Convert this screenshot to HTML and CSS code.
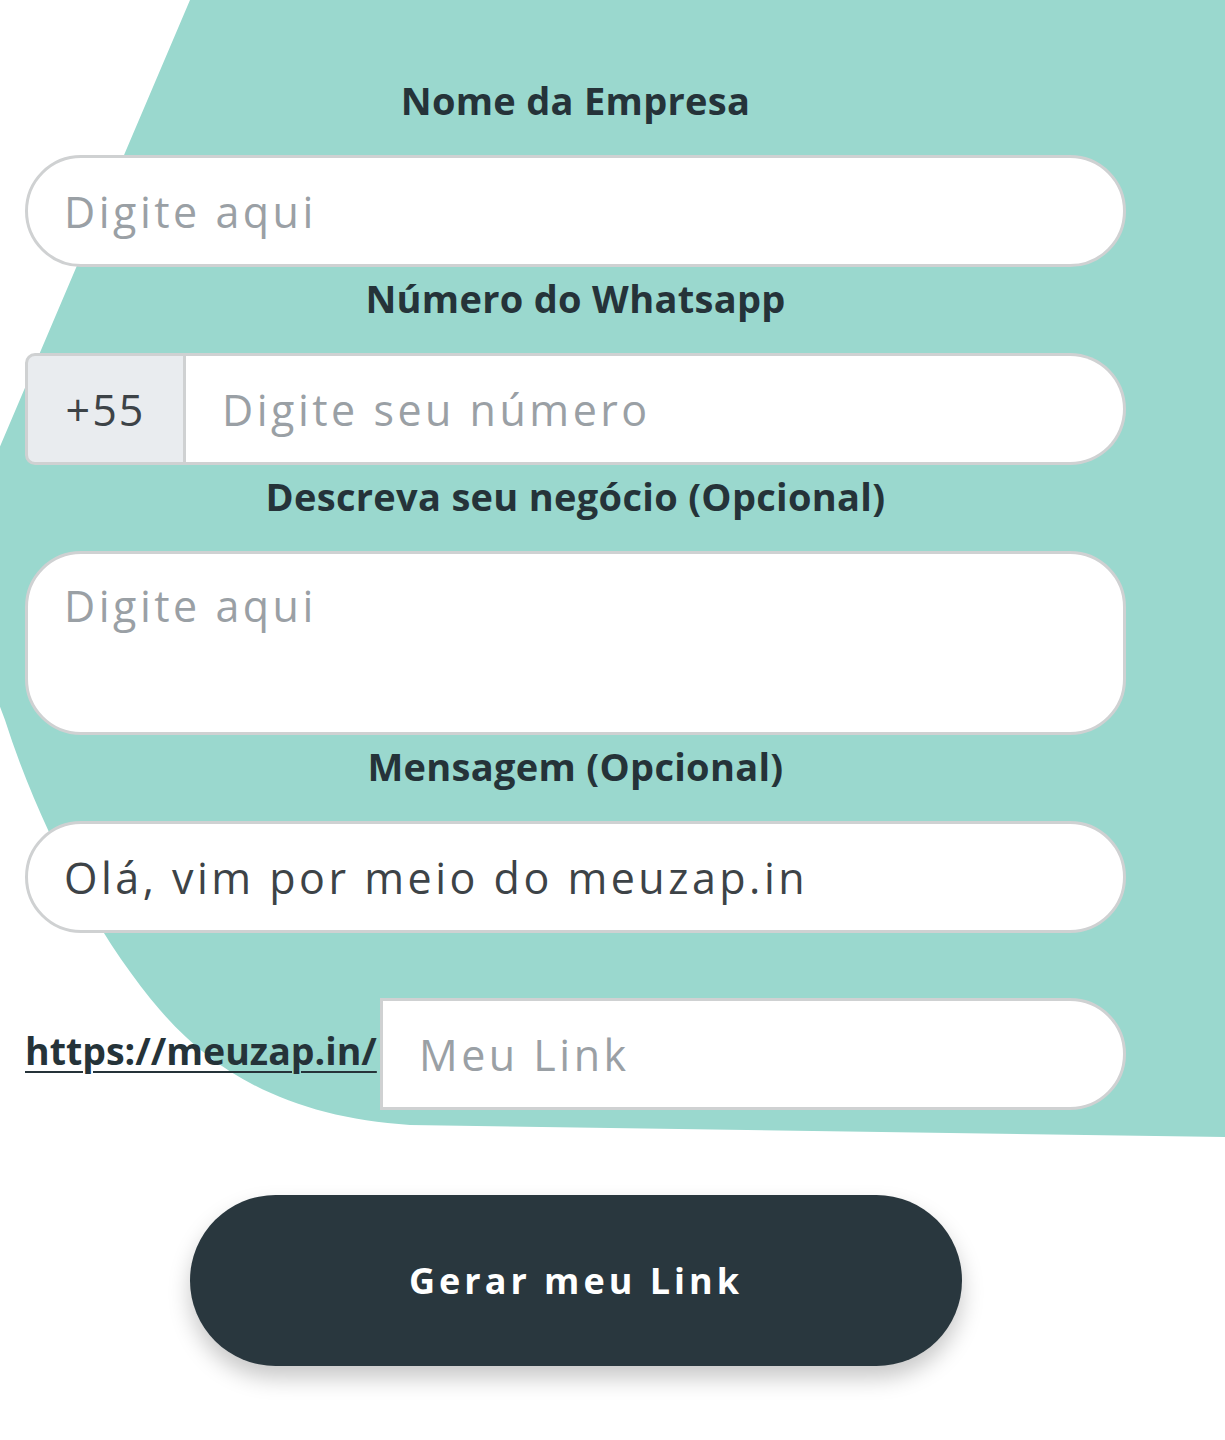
FILE: index.html
```html
<!DOCTYPE html>
<html lang="pt-BR">
<head>
<meta charset="utf-8">
<title>meuzap.in</title>
<link rel="stylesheet" href="styles.css">
</head>
<body>
<div class="page">
  <svg class="blob" width="1225" height="1140" viewBox="0 0 1225 1140" aria-hidden="true">
    <path d="M190 0 L1225 0 L1225 1137 L410 1125 C300 1118 220 1080 160 1010 C100 940 40 830 5 720 L-10 680 L-10 470 Z" fill="#9ad8ce"/>
  </svg>
  <form class="form">
    <label class="label" for="empresa">Nome da Empresa</label>
    <input class="field" id="empresa" type="text" placeholder="Digite aqui">

    <label class="label" for="numero">Número do Whatsapp</label>
    <div class="group">
      <span class="prefix">+55</span>
      <input class="field field-right" id="numero" type="text" placeholder="Digite seu número">
    </div>

    <label class="label" for="descricao">Descreva seu negócio (Opcional)</label>
    <textarea class="field area" id="descricao" placeholder="Digite aqui"></textarea>

    <label class="label" for="mensagem">Mensagem (Opcional)</label>
    <input class="field" id="mensagem" type="text" value="Olá, vim por meio do meuzap.in">

    <div class="link-row">
      <a class="domain" href="#">https://meuzap.in/</a>
      <input class="field field-right link-field" type="text" placeholder="Meu Link">
    </div>

    <div class="actions">
      <button class="btn" type="button">Gerar meu Link</button>
    </div>
  </form>
</div>
</body>
</html>
```

FILE: styles.css
```css
* { box-sizing: border-box; }
html, body { margin: 0; padding: 0; background: #ffffff; }
body { font-family: "Open Sans", "Noto Sans", sans-serif; color: #253339; }

.page {
  position: relative;
  width: 1225px;
  min-height: 1440px;
  overflow: hidden;
}

.blob {
  position: absolute;
  left: 0;
  top: 0;
  z-index: 0;
}

.form {
  position: relative;
  z-index: 1;
  display: flex;
  flex-direction: column;
  padding: 69px 99px 0 25px;
}

.label {
  display: block;
  height: 66px;
  line-height: 62px;
  text-align: center;
  font-family: "Open Sans", "Noto Sans", sans-serif;
  font-weight: 700;
  font-size: 38px;
  letter-spacing: 0.3px;
  color: #253339;
  margin-bottom: 20px;
  white-space: nowrap;
}

.field {
  display: block;
  width: 100%;
  height: 112px;
  border: 3px solid #cfd1d2;
  border-radius: 56px;
  background: #ffffff;
  padding: 0 36px;
  font-family: "Open Sans", sans-serif;
  font-size: 43px;
  color: #3d4347;
  outline: none;
  letter-spacing: 3.5px;
}
.field::placeholder { color: #9aa0a5; opacity: 1; }

.group {
  display: flex;
  height: 112px;
}
.prefix {
  flex: 0 0 161px;
  display: flex;
  align-items: center;
  justify-content: center;
  background: #e9ecef;
  border: 3px solid #cfd1d2;
  border-radius: 10px 0 0 10px;
  font-family: "Open Sans", sans-serif;
  font-size: 43px;
  letter-spacing: 2px;
  color: #3d4347;
}
.field-right {
  flex: 1 1 auto;
  width: auto;
  border-left: none;
  border-radius: 0 56px 56px 0;
  padding-left: 36px;
}

.area {
  height: 184px;
  resize: none;
  padding: 22px 36px;
  line-height: 60px;
}

.link-row {
  display: flex;
  align-items: center;
  height: 112px;
  margin-top: 65px;
}
.domain {
  flex: 0 0 355px;
  font-family: "Open Sans", "Noto Sans", sans-serif;
  font-weight: 700;
  font-size: 37.5px;
  color: #253339;
  text-decoration: underline;
  text-decoration-thickness: 2px;
  text-underline-offset: 6px;
  white-space: nowrap;
  letter-spacing: 0;
  margin-top: -8px;
}
.link-field {
  height: 112px;
  border-left: 3px solid #cfd1d2;
  border-radius: 0 56px 56px 0;
}

.actions {
  display: flex;
  justify-content: center;
  margin-top: 85px;
}
.btn {
  width: 772px;
  height: 171px;
  margin-left: 165px;
  margin-right: 164px;
  border: none;
  border-radius: 86px;
  background: #29373e;
  color: #ffffff;
  font-family: "Open Sans", sans-serif;
  font-weight: 700;
  font-size: 36px;
  letter-spacing: 4px;
  box-shadow: 0 12px 22px rgba(0, 0, 0, 0.22);
  cursor: pointer;
}
```
